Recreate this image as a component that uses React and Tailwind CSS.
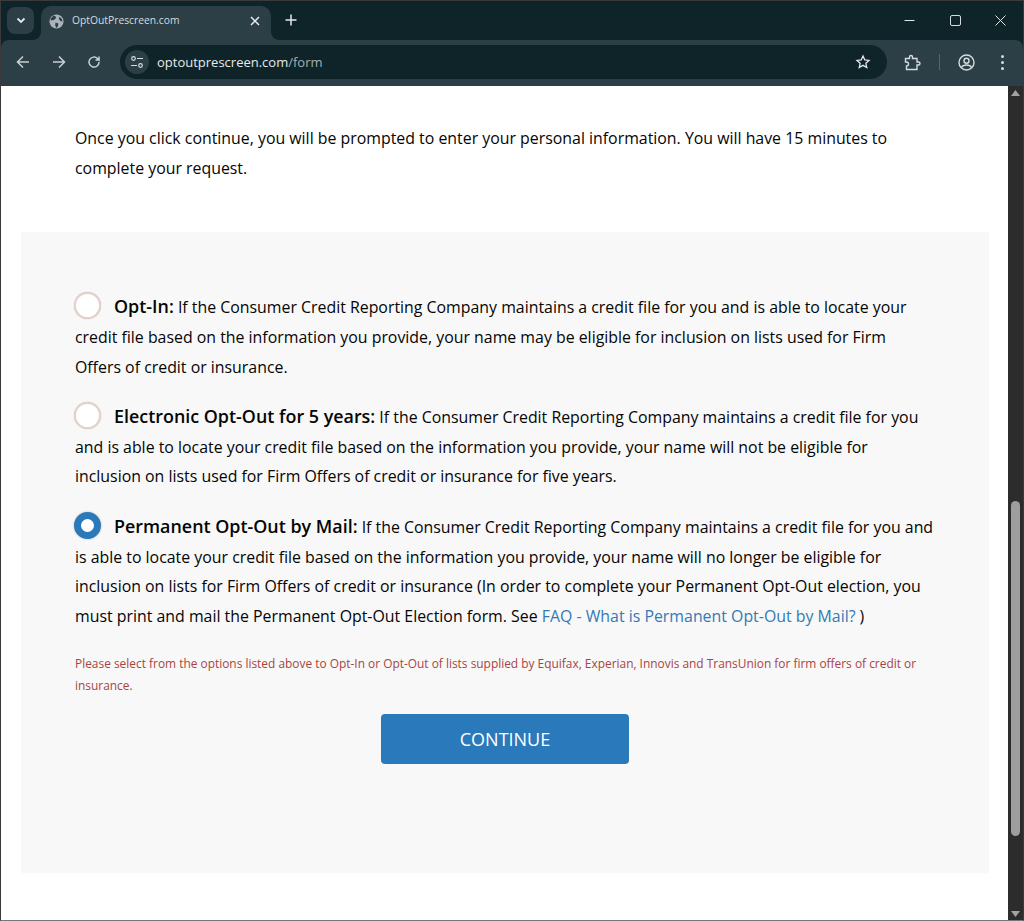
import React from "react";

const Radio = ({ checked }) => (
    <span
        className={
            checked
                ? "inline-block w-[27px] h-[27px] rounded-full bg-white border-[7px] border-[#2a7abb] shadow-[0_0_2px_#c9a9a0] align-middle mr-[13px] relative top-[-3px] ml-[-1px]"
                : "inline-block w-[27px] h-[27px] rounded-full bg-white border-2 border-[#e3d2cd] shadow-[0_0_1px_#c9a9a0] align-middle mr-[13px] relative top-[-3px] ml-[-1px]"
        }
    />
);

const Option = ({ checked, title, children }) => (
    <p className="mb-[19.7px] leading-[29.75px]">
        <Radio checked={checked} />
        <b className="font-semibold text-[17.9px]">{title}</b> {children}
    </p>
);

export default function App() {
    return (
        <div className="w-[1024px] h-[921px] overflow-hidden flex flex-col bg-white border border-[#3a3a3a] border-b-[#777]" style={{ fontFamily: '"Open Sans", sans-serif' }}>
            {/* tab strip */}
            <div className="h-[39px] bg-[#0f2428] flex items-center shrink-0 relative">
                <div className="ml-[6px] w-[27px] h-[27px] rounded-lg bg-[#2c3f46] flex items-center justify-center mt-[-1px]">
                    <svg width="12" height="12" viewBox="0 0 12 12" fill="none" stroke="#e3e8ea" strokeWidth="1.8"><path d="M2.5 4.5 6 8l3.5-3.5" /></svg>
                </div>
                <div className="ml-[7px] w-[230px] h-[34px] mt-[5px] bg-[#2c3f46] rounded-t-[10px] flex items-center pl-[8px] pr-[11px] pb-[4px] self-start relative">
                    <svg width="15" height="15" viewBox="0 0 16 16" className="shrink-0">
                        <circle cx="8" cy="8" r="7.5" fill="#a9b4b8" />
                        <path d="M5 1.500 7.500 3 7 5 5 6.500 2 7 1.500 5zM7 9l3 1-.5 3L8 15 6.500 12zM11 3l2.500 2 1 3-2.500-.5L10.500 5z" fill="#2c3f46" />
                    </svg>
                    <span className="ml-[8px] text-[10.3px] text-[#d5dcde] flex-1">OptOutPrescreen.com</span>
                    <svg width="10" height="10" viewBox="0 0 10 10" stroke="#e8ecee" strokeWidth="1.500"><path d="M1 1l8 8M9 1l-8 8" /></svg>
                    {/* flare where the tab meets the toolbar */}
                    <svg className="absolute right-[-8px] bottom-0" width="8" height="8" viewBox="0 0 8 8" fill="#2c3f46"><path d="M0 0v8h8A8 8 0 0 1 0 0z" /></svg>
                    <svg className="absolute left-[-8px] bottom-0" width="8" height="8" viewBox="0 0 8 8" fill="#2c3f46"><path d="M8 0v8H0A8 8 0 0 0 8 0z" /></svg>
                </div>
                <svg className="ml-[14px] mt-[-1px]" width="12" height="12" viewBox="0 0 12 12" stroke="#e3e8ea" strokeWidth="1.500"><path d="M6 .5v11M.5 6h11" /></svg>
                <div className="ml-auto flex items-center mt-[-1px]">
                    <svg className="mr-[35px]" width="11" height="11" viewBox="0 0 11 11" stroke="#e3e8ea"><path d="M.5 5.500h10" /></svg>
                    <svg className="mr-[34px]" width="11" height="11" viewBox="0 0 11 11" fill="none" stroke="#d5dcde" strokeWidth="1"><rect x=".5" y=".5" width="10" height="10" rx="1.500" /></svg>
                    <svg className="mr-[17px]" width="11" height="11" viewBox="0 0 11 11" stroke="#e3e8ea"><path d="M.5.5l10 10M10.500.5l-10 10" /></svg>
                </div>
            </div>
            {/* toolbar */}
            <div className="bg-[#0f2428] shrink-0">
                <div className="h-[46px] bg-[#2c3f46] flex items-center rounded-t-[8px] text-[#d5dcde] pb-[2px]">
                    <svg className="ml-[15px]" width="14" height="14" viewBox="0 0 14 14" fill="none" stroke="#c9d1d4" strokeWidth="1.500"><path d="M13 7H1.500M7 1.500 1.500 7 7 12.500" /></svg>
                    <svg className="ml-[22px]" width="14" height="14" viewBox="0 0 14 14" fill="none" stroke="#c9d1d4" strokeWidth="1.500"><path d="M1 7h11.500M7 1.500 12.500 7 7 12.500" /></svg>
                    <svg className="ml-[21px]" width="14" height="14" viewBox="0 0 14 14" fill="none" stroke="#c9d1d4" strokeWidth="1.500"><path d="M12 7a5 5 0 1 1-1.500-3.500L12 5V1.500M12 5H8.500" /></svg>
                    <div className="ml-[19px] w-[767px] h-[34px] bg-[#0f2428] rounded-full flex items-center pl-[5px] pr-[16px]">
                        <div className="w-[24px] h-[24px] rounded-full bg-[#2c3f46] flex items-center justify-center">
                            <svg width="14" height="14" viewBox="0 0 14 14" fill="none" stroke="#d5dcde" strokeWidth="1.200"><circle cx="3.500" cy="3.500" r="1.800" /><path d="M7 3.500h6M1 10.500h6" /><circle cx="10.500" cy="10.500" r="1.800" /></svg>
                        </div>
                        <span className="ml-[8px] pt-[2px] text-[13px] text-[#e6eaec] flex-1">optoutprescreen.com<span className="text-[#a5b0b4]">/form</span></span>
                        <svg width="16" height="16" viewBox="0 0 24 24" fill="none" stroke="#e3e8ea" strokeWidth="2"><path d="m12 3 2.700 5.900 6.300.7-4.700 4.300 1.300 6.300L12 17l-5.600 3.200 1.300-6.300L3 9.600l6.300-.7z" /></svg>
                    </div>
                    <svg className="ml-[17px]" width="17" height="17" viewBox="0 0 17 17" fill="none" stroke="#d5dcde" strokeWidth="1.400"><path d="M1.500 4.500h4V3a1.500 1.500 0 0 1 3 0v1.500h4.500V8h1.500a1.500 1.500 0 0 1 0 3H13v4.500H2.500V12a2 2 0 0 0 0-4h-1z" /></svg>
                    <div className="ml-[18px] w-px h-[16px] bg-[#55666c]" />
                    <svg className="ml-[18px]" width="17" height="17" viewBox="0 0 17 17" fill="none" stroke="#d5dcde" strokeWidth="1.400"><circle cx="8.500" cy="8.500" r="7.500" /><circle cx="8.500" cy="6.800" r="2.500" /><path d="M3.500 13.500c1-2 3-2.500 5-2.500s4 .5 5 2.500" /></svg>
                    <div className="ml-[26px] flex flex-col gap-[3px]">
                        <span className="w-[3px] h-[3px] rounded-full bg-[#d5dcde]" />
                        <span className="w-[3px] h-[3px] rounded-full bg-[#d5dcde]" />
                        <span className="w-[3px] h-[3px] rounded-full bg-[#d5dcde]" />
                    </div>
                </div>
            </div>
            {/* page */}
            <div className="flex-1 flex min-h-0">
                <div className="flex-1 min-w-0 text-[15.88px] text-[#050505]">
                    <p className="ml-[74px] mr-[110px] mt-[37px] leading-[30px]">
                        Once you click continue, you will be prompted to enter your personal information. You will have 15 minutes to complete your request.
                    </p>
                    <div className="mt-[49px] ml-[20px] w-[968px] h-[641px] bg-[#f8f8f8] pl-[54px] pr-[54px] pt-[60px]">
                        <Option title="Opt-In:">
                            If the Consumer Credit Reporting Company maintains a credit file for you and is able to locate your credit file based on the information you provide, your name may be eligible for inclusion on lists used for Firm Offers of credit or insurance.
                        </Option>
                        <Option title="Electronic Opt-Out for 5 years:">
                            If the Consumer Credit Reporting Company maintains a credit file for you and is able to locate your credit file based on the information you provide, your name will not be eligible for inclusion on lists used for Firm Offers of credit or insurance for five years.
                        </Option>
                        <Option checked title="Permanent Opt-Out by Mail:">
                            If the Consumer Credit Reporting Company maintains a credit file for you and is able to locate your credit file based on the information you provide, your name will no longer be eligible for inclusion on lists for Firm Offers of credit or insurance (In order to complete your Permanent Opt-Out election, you must print and mail the Permanent Opt-Out Election form. See <a className="text-[#337ab7]">FAQ - What is Permanent Opt-Out by Mail?</a> )
                        </Option>
                        <p className="text-[11.92px] leading-[22px] text-[#a94442] mt-[1px]">
                            Please select from the options listed above to Opt-In or Opt-Out of lists supplied by Equifax, Experian, Innovis and TransUnion for firm offers of credit or insurance.
                        </p>
                        <button className="block mx-auto mt-[18px] w-[248px] h-[50px] pt-[1px] bg-[#2a7abb] rounded-[4px] text-white text-[18px]">
                            CONTINUE
                        </button>
                    </div>
                </div>
                {/* scrollbar */}
                <div className="w-[15px] bg-[#2c2c2c] shrink-0 flex flex-col items-center relative mr-0">
                    <svg className="mt-[4px]" width="9" height="6" viewBox="0 0 9 6" fill="#a3a3a3"><path d="M4.500 0 9 6H0z" /></svg>
                    <div className="mt-[405px] w-[9px] h-[335px] rounded-full bg-[#9e9e9e]" />
                    <svg className="mt-auto mb-[3px]" width="9" height="6" viewBox="0 0 9 6" fill="#a3a3a3"><path d="M0 0h9L4.500 6z" /></svg>
                </div>
            </div>
        </div>
    );
}
